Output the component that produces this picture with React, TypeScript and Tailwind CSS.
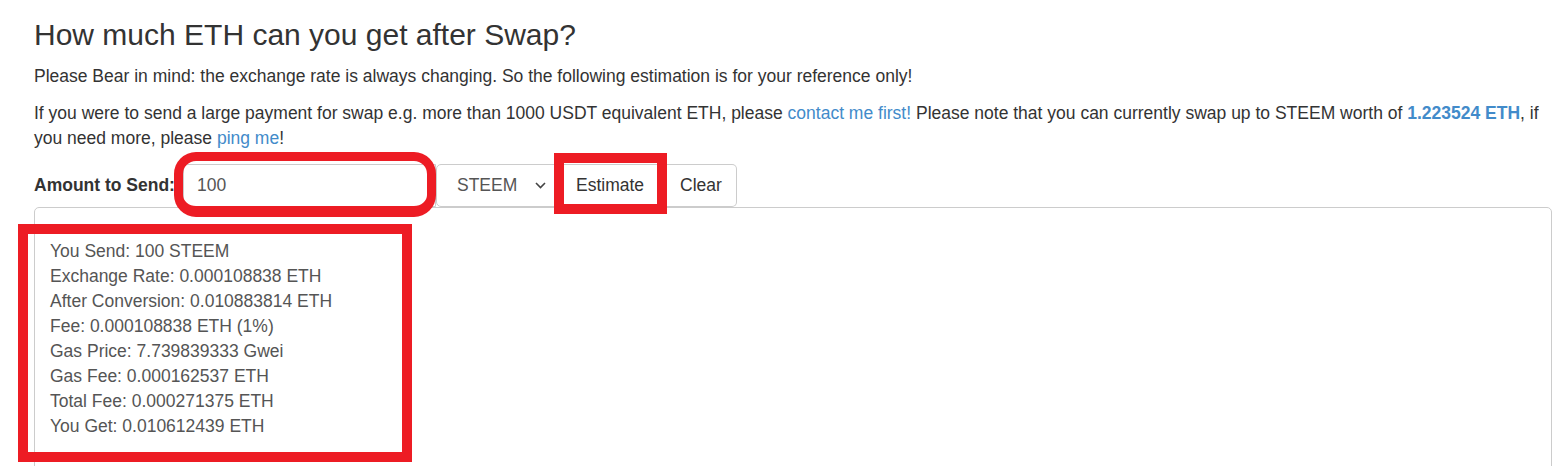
import React from 'react';

const results = [
  'You Send: 100 STEEM',
  'Exchange Rate: 0.000108838 ETH',
  'After Conversion: 0.010883814 ETH',
  'Fee: 0.000108838 ETH (1%)',
  'Gas Price: 7.739839333 Gwei',
  'Gas Fee: 0.000162537 ETH',
  'Total Fee: 0.000271375 ETH',
  'You Get: 0.010612439 ETH',
];

export default function App() {
  return (
    <div className="relative h-[466px] overflow-hidden bg-white pl-[34px] pt-[18px] font-['Liberation_Sans',Arial,sans-serif] text-[17.5px] leading-[25px] text-[#333]">
      <div className="w-[1518px]">
        <h3 className="mb-[12.5px] text-[30px] leading-[33px] font-normal">How much ETH can you get after Swap?</h3>
        <p className="mb-[12.5px]">
          Please Bear in mind: the exchange rate is always changing. So the following estimation is for your reference only!
        </p>
        <p className="mb-[12.5px]">
          If you were to send a large payment for swap e.g. more than 1000 USDT equivalent ETH, please{' '}
          <a className="text-[#428bca]">contact me first!</a> Please note that you can currently swap up to STEEM worth of{' '}
          <b className="text-[#428bca]">1.223524 ETH</b>, if
          <br />
          you need more, please <a className="text-[#428bca]">ping me</a>!
        </p>

        {/* 입력 줄 */}
        <div className="flex h-[43px] items-center">
          <label className="w-[149px] shrink-0 whitespace-nowrap font-bold">Amount to Send:</label>
          <div className="flex h-full">
            <input
              readOnly
              value="100"
              className="h-full w-[253px] rounded-l-[5px] border border-[#ccc] px-[13px] text-[#555] outline-none"
            />
            <div className="flex h-full w-[125px] items-center justify-between rounded-[5px] border border-[#ccc] pl-[20px] pr-[14px] text-[#555]">
              <span>STEEM</span>
              <svg width="11" height="7" viewBox="0 0 11 7" fill="none">
                <path d="M1 1l4.5 4.5L10 1" stroke="#444" strokeWidth="1.6" />
              </svg>
            </div>
            <button className="h-full w-[104px] border border-[#ccc] bg-white pl-[14px] text-left text-[#333]">Estimate</button>
            <button className="h-full w-[72px] rounded-r-[5px] border border-l-0 border-[#ccc] bg-white pl-[1px] text-[#333]">Clear</button>
          </div>
        </div>

        {/* 결과 */}
        <div className="h-[270px] rounded-[5px] border border-[#ccc] pl-[15px] pt-[31px] text-[#555]">
          {results.map((r) => (
            <div key={r}>{r}</div>
          ))}
        </div>
      </div>

      {/* 빨간 표시 */}
      <div className="absolute left-[174px] top-[152px] h-[65px] w-[262px] rounded-[22px] border-[9px] border-b-[11px] border-[#ed1c24]" />
      <div className="absolute left-[554px] top-[153px] h-[61px] w-[113px] border-[10px] border-[#ed1c24]" />
      <div className="absolute left-[18px] top-[224px] h-[238px] w-[394px] border-[10px] border-[#ed1c24]" />
    </div>
  );
}
